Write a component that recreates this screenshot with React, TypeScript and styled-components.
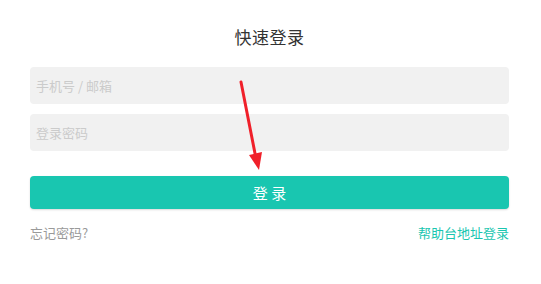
import React from "react";
import styled, { createGlobalStyle } from "styled-components";

const GlobalStyle = createGlobalStyle`
  html, body { margin: 0; padding: 0; background: #fff; }
  body { font-family: "Noto Sans CJK SC", "Noto Sans", sans-serif; }
  * { box-sizing: border-box; }
`;

const Page = styled.div`
  position: relative;
  width: 541px;
  height: 284px;
  padding: 0 32px 0 30px;
  display: flex;
  flex-direction: column;
`;

const Title = styled.h1`
  margin: 24px 0 0;
  font-size: 17px;
  line-height: 26px;
  font-weight: 400;
  color: #333;
  text-align: center;
  letter-spacing: 0.5px;
`;

const Form = styled.div`
  margin-top: 17px;
  display: flex;
  flex-direction: column;
  gap: 10px;
`;

const Field = styled.input`
  height: 37px;
  border: none;
  outline: none;
  border-radius: 4px;
  background: #f1f1f1;
  padding: 0 6px;
  font-family: "Noto Sans CJK SC", "Noto Sans", sans-serif;
  font-size: 13px;
  color: #333;
  &::placeholder { color: #cbcbcb; }
`;

const Button = styled.button`
  margin-top: 25px;
  height: 33px;
  border: none;
  border-radius: 4px;
  background: #19c6b0;
  color: #fff;
  font-family: "Noto Sans CJK SC", "Noto Sans", sans-serif;
  font-size: 15px;
  letter-spacing: 0;
  box-shadow: 0 1px 2px rgba(0, 0, 0, 0.15);
`;

const Footer = styled.div`
  margin-top: 15px;
  display: flex;
  justify-content: space-between;
  font-size: 13px;
  line-height: 18px;
`;

const Forgot = styled.span`
  color: #9a9a9a;
`;

const HelpLink = styled.span`
  color: #19c6b0;
`;

const Arrow = styled.svg`
  position: absolute;
  left: 0;
  top: 0;
  pointer-events: none;
`;

export default function App() {
  return (
    <>
      <GlobalStyle />
      <Page>
        <Title>快速登录</Title>
        <Form>
          <Field placeholder="手机号 / 邮箱" />
          <Field placeholder="登录密码" type="password" />
        </Form>
        <Button>登 录</Button>
        <Footer>
          <Forgot>忘记密码?</Forgot>
          <HelpLink>帮助台地址登录</HelpLink>
        </Footer>
        <Arrow width="541" height="284" viewBox="0 0 541 284">
          <line x1="241" y1="82" x2="255.5" y2="156" stroke="#f0202a" strokeWidth="3" strokeLinecap="round" />
          <polygon points="249,155 262,152 259,170" fill="#f0202a" />
        </Arrow>
      </Page>
    </>
  );
}
